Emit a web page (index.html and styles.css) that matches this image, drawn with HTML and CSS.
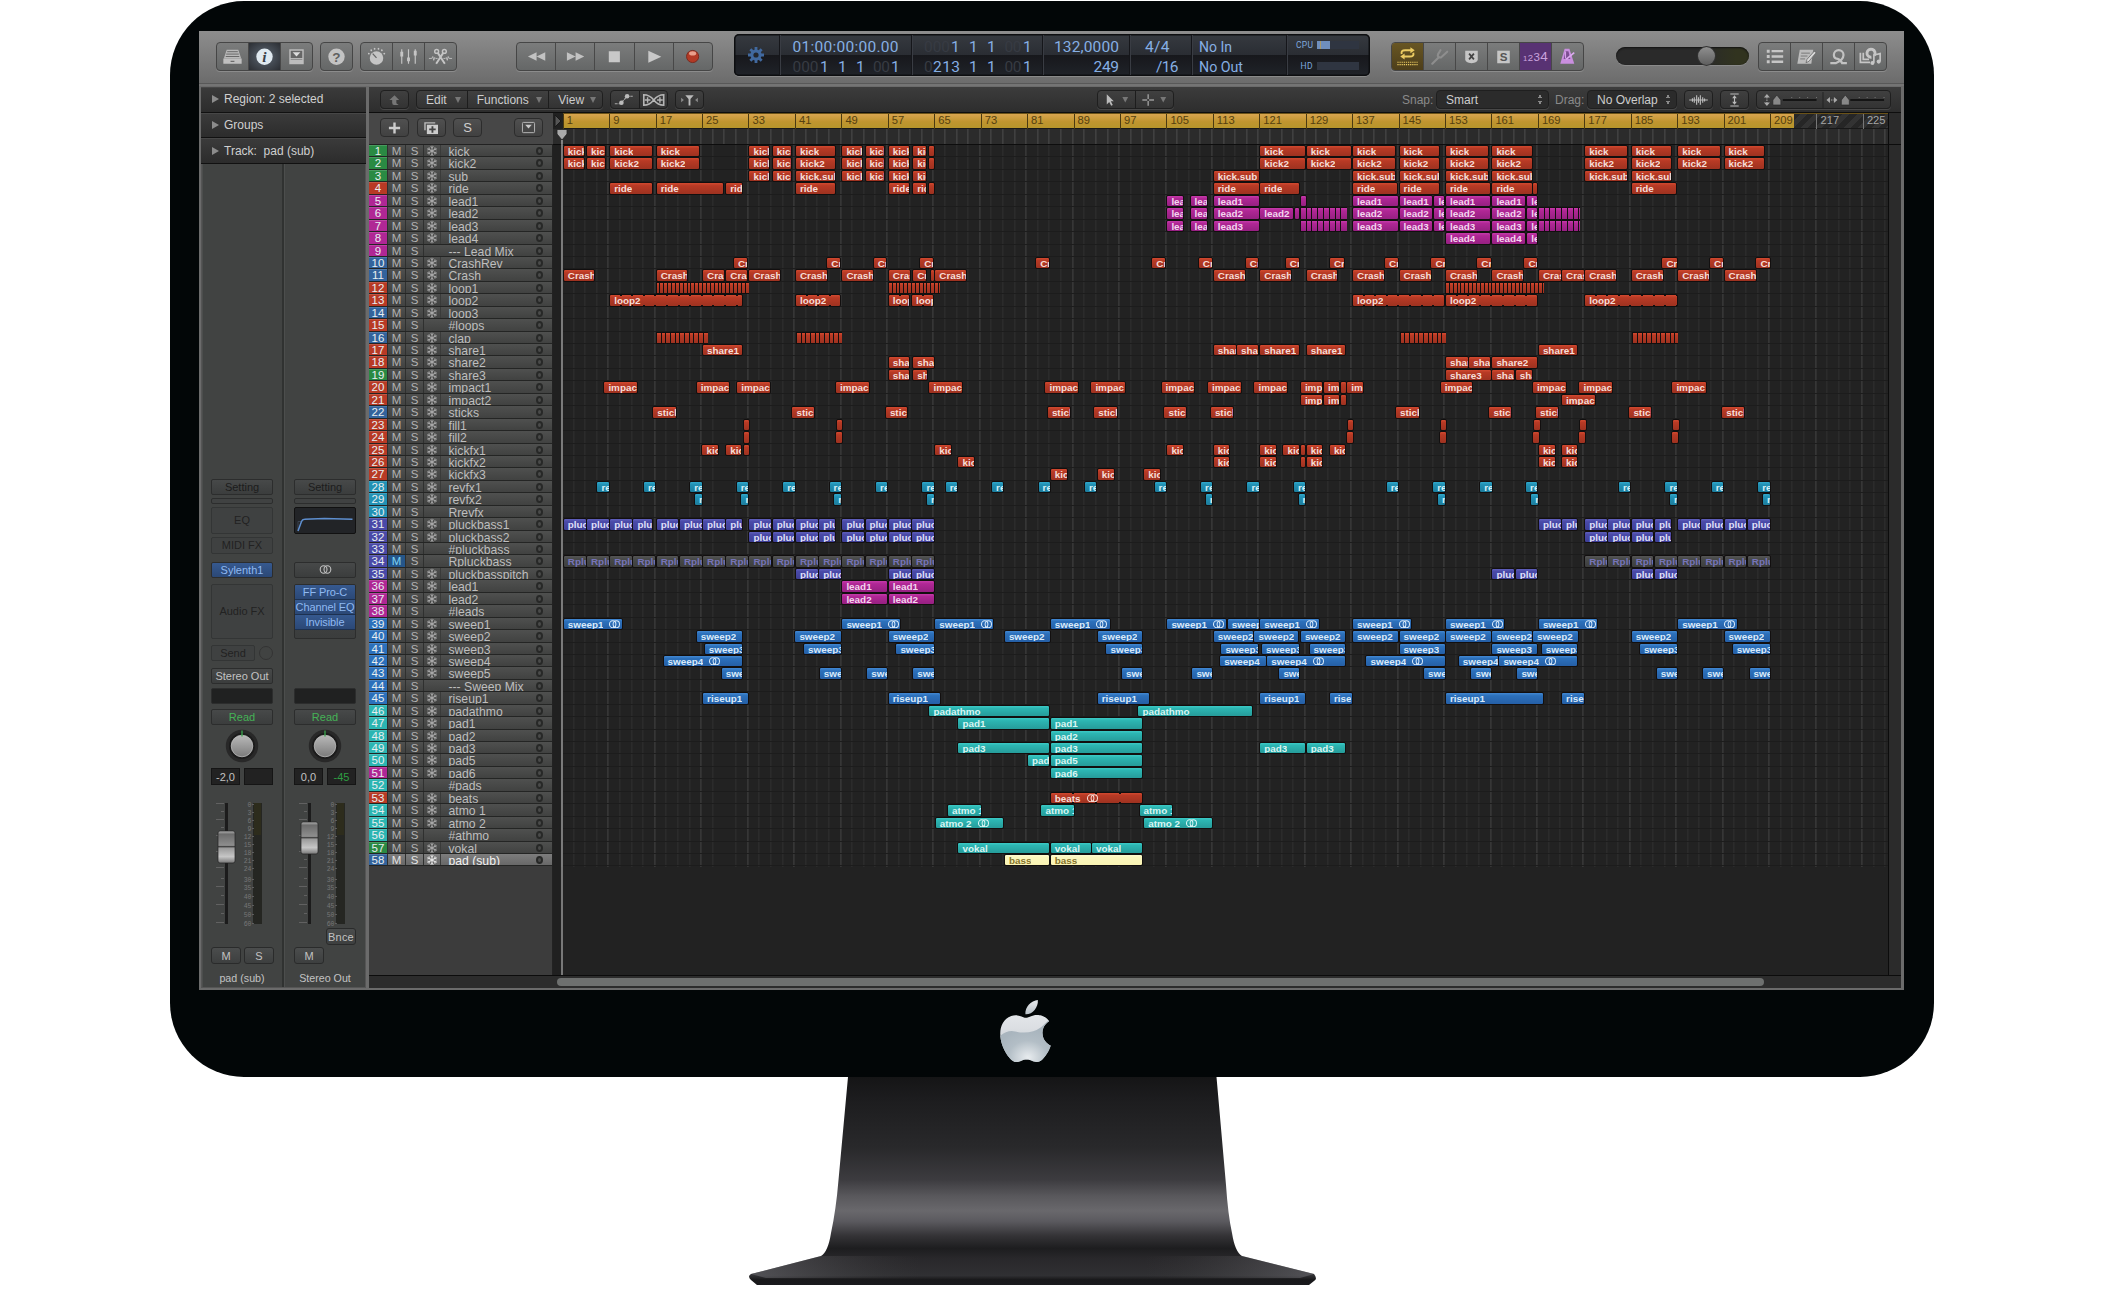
FILE: index.html
```html
<!DOCTYPE html>
<html lang="en">
<head>
<meta charset="utf-8">
<title>Arrange</title>
<link rel="stylesheet" href="styles.css">
</head>
<body>
<svg class="defs" width="0" height="0">
  <defs>
    <symbol id="flake" viewBox="0 0 12 12"><g fill="none" stroke="currentColor" stroke-width="1.1"><path d="M6 .8v10.4M1.5 3.4l9 5.2M10.500 3.400l-9 5.200"/><path d="M4.300 1.500L6 3l1.700-1.500M4.300 10.500L6 9l1.700 1.500M1.300 5l2.200-.6-.5-2.200M10.700 7l-2.200.6.5 2.200M10.700 5l-2.200-.6.5-2.200M1.300 7l2.200.6-.5 2.200" stroke-width=".8"/></g></symbol>
    <symbol id="rings" viewBox="0 0 13 9"><g fill="none" stroke="currentColor" stroke-width="1.100"><ellipse cx="4.600" cy="4.500" rx="3.400" ry="3.700"/><ellipse cx="8.400" cy="4.500" rx="3.400" ry="3.700"/></g></symbol>
    <linearGradient id="faderCap" x1="0" y1="0" x2="0" y2="1"><stop offset="0" stop-color="#b5b5b5"/><stop offset=".1" stop-color="#6c6c6c"/><stop offset=".45" stop-color="#8e8e8e"/><stop offset=".49" stop-color="#3a3a3a"/><stop offset=".53" stop-color="#9a9a9a"/><stop offset=".8" stop-color="#c6c6c6"/><stop offset="1" stop-color="#777"/></linearGradient>
    <linearGradient id="knobCap" x1="0" y1="0" x2="0" y2="1"><stop offset="0" stop-color="#b9b9b9"/><stop offset="1" stop-color="#7b7b7b"/></linearGradient>
    <symbol id="knob" viewBox="0 0 34 34"><circle cx="17" cy="17" r="16.200" fill="#282828"/><circle cx="17" cy="17" r="13" fill="#1b1b1b"/><circle cx="17" cy="17" r="10.800" fill="url(#knobCap)" stroke="#c4c4c4" stroke-width=".7"/><path d="M17 1.500v6" stroke="#3aa64c" stroke-width="1.300"/></symbol>
  </defs>
</svg>

<main class="monitor">
  <div class="screen">
    <header class="toolbar">
      <div class="group g-views">
        <button><svg viewBox="0 0 32 28"><path d="M10 7h12l3 9H7z" fill="#b9b9b9"/><path d="M10.500 9h11M9.500 11.500h13M9 14h14" stroke="#666" stroke-width="1"/><path d="M6.500 16h19v5.500h-19z" fill="#c0c0c0"/><path d="M14 19h4" stroke="#555"/></svg></button>
        <button class="pressed"><svg viewBox="0 0 32 28"><circle cx="16" cy="14.300" r="8.500" fill="#dfe9f0"/><text x="16" y="19.500" text-anchor="middle" class="info">i</text></svg></button>
        <button><svg viewBox="0 0 32 28"><rect x="8.500" y="6.500" width="15" height="15.500" fill="#bdbdbd"/><path d="M10 8h12v7.500H10z" fill="#666"/><path d="M12 9.500h8l-4 4.500z" fill="#ddd"/><path d="M10 17h12" stroke="#888"/></svg></button>
      </div>
      <div class="group g-help">
        <button><svg viewBox="0 0 32 28"><circle cx="16" cy="14.300" r="8.500" fill="#c3c3c3"/><text x="16" y="19.300" text-anchor="middle" class="help">?</text></svg></button>
      </div>
      <div class="group g-tools">
        <button><svg viewBox="0 0 32 28"><circle cx="16" cy="15.500" r="7" fill="#c5c5c5"/><path d="M12 11l4 4.500" stroke="#666" stroke-width="1.300"/><path d="M8 11l.1.100M10.500 7.500l.1.100M14 6l.1.100M18 6l.1.100M21.500 7.500l.1.100M24 11l.1.100" stroke="#c5c5c5" stroke-width="1.800" stroke-linecap="round"/></svg></button>
        <button><svg viewBox="0 0 32 28" stroke="#c5c5c5" fill="#c5c5c5"><path d="M9 6.500v15M16 6.500v15M23 6.500v15" stroke-width="1.200"/><path d="M7.500 9h3v5h-3zM14.500 15h3v4h-3zM21.500 8h3v5h-3z" stroke="none"/></svg></button>
        <button><svg viewBox="0 0 32 28" fill="none" stroke="#c5c5c5"><path d="M11.500 21.500L19 10M20.500 21.500L13 10" stroke-width="2"/><circle cx="12" cy="8.700" r="2" stroke-width="1.500"/><circle cx="20" cy="8.700" r="2" stroke-width="1.500"/><path d="M4 16h3l1-2 1 4 1-3 1 1h2M28 16h-3l-1-2-1 4-1-3-1 1h-2" stroke-width=".9"/></svg></button>
      </div>
      <div class="group g-transport">
        <button><svg viewBox="0 0 39 28"><path d="M20 9.500v9l-9-4.500zM29 9.500v9L20 14z" fill="#c2c2c2"/></svg></button>
        <button><svg viewBox="0 0 39 28"><path d="M11 9.500v9l9-4.500zM20 9.500v9l9-4.500z" fill="#c2c2c2"/></svg></button>
        <button><svg viewBox="0 0 39 28"><path d="M14 8.500h11.500v11.500H14z" fill="#c8c8c8"/></svg></button>
        <button><svg viewBox="0 0 39 28"><path d="M13.500 8v12.500L27 14.200z" fill="#c8c8c8"/></svg></button>
        <button><svg viewBox="0 0 39 28"><circle cx="19" cy="14" r="6.300" fill="#b23a25" stroke="#7a2a1e"/><ellipse cx="19" cy="10.800" rx="3.700" ry="2.200" fill="#e9a08c"/></svg></button>
      </div>
      <div class="lcd">
        <svg viewBox="734 34 636 42" width="636" height="42">
          <g transform="translate(756 55)" fill="#41699f"><circle r="5.600"/><path d="M-1.400-8h2.800v16h-2.800zM-8-1.400h16v2.800h-16z"/><path d="M-1.400-8h2.800v16h-2.800zM-8-1.400h16v2.800h-16z" transform="rotate(45)"/><circle r="2.600" fill="#23262c"/></g>
          <path d="M779.500 35v40M911.500 35v40M1042.500 35v40M1129.500 35v40M1191.500 35v40M1286.500 35v40" stroke="#15161a"/>
          <path d="M780.500 35v40M912.500 35v40M1043.500 35v40M1130.500 35v40M1192.500 35v40M1287.500 35v40" stroke="#393c43"/>
          <g class="digits">
            <text x="792.500" y="52" textLength="106">01:00:00:00.00</text>
            <text class="ghost" x="792.500" y="71.500" textLength="26">000</text><text x="820" y="71.500">1</text><text x="838" y="71.500">1</text><text x="856" y="71.500">1</text><text class="ghost" x="873" y="71.500" textLength="17">00</text><text x="891" y="71.500">1</text>
            <text class="ghost" x="924" y="52" textLength="26">000</text><text x="951" y="52">1</text><text x="969" y="52">1</text><text x="987" y="52">1</text><text class="ghost" x="1004.500" y="52" textLength="17">00</text><text x="1023" y="52">1</text>
            <text class="ghost" x="924" y="71.500" textLength="8">0</text><text x="933" y="71.500" textLength="27">213</text><text x="969" y="71.500">1</text><text x="987" y="71.500">1</text><text class="ghost" x="1004.500" y="71.500" textLength="17">00</text><text x="1023" y="71.500">1</text>
            <text x="1054" y="52" textLength="65">132,0000</text><text x="1093.500" y="71.500" textLength="25.500">249</text>
            <text x="1145" y="52" textLength="24.500">4/4</text><text x="1156" y="71.500" textLength="22.500">/16</text>
            <text x="1199" y="52" textLength="33" lengthAdjust="spacingAndGlyphs">No In</text><text x="1199" y="71.500" textLength="44" lengthAdjust="spacingAndGlyphs">No Out</text>
          </g>
          <g class="meters"><text x="1296" y="48" textLength="17">CPU</text><text x="1300.500" y="69" textLength="12">HD</text></g>
          <path d="M1317 41h42v8h-42zM1317 62h42v8h-42z" fill="#2f3541"/><path d="M1317 41h13v8h-13z" fill="#6f8fbd"/><path d="M1320.500 41v8" stroke="#a99a6a"/>
        </svg>
      </div>
      <div class="group g-modes">
        <button class="gold"><svg viewBox="0 0 32 28" fill="none" stroke="#ebcb62"><path d="M10 11.500q-1-4 3.500-4H20M22 10q1 4-3.500 4H12" stroke-width="2"/><path d="M19 4.500l4.500 3-4.500 3zM13 11l-4.500 3 4.500 3z" fill="#ebcb62" stroke="none"/><path d="M5.500 20h21M5.500 22.500h21" stroke-width="1.200" stroke-dasharray="1.300 .9"/></svg></button>
        <button><svg viewBox="0 0 32 28" fill="none" stroke="#8e8e8e" stroke-width="2.200" stroke-linecap="round"><path d="M8.500 21.500l6.500-6.500M17 7.500l-2.500 4q-1.200 3.500 3 3.500L24 9"/></svg></button>
        <button><svg viewBox="0 0 32 28"><path d="M9.500 8h13v9q0 3-6.500 4-6.500-1-6.500-4z" fill="#c6c6c6"/><path d="M13.500 11l5 6M18.500 11l-5 6" stroke="#444" stroke-width="1.800"/></svg></button>
        <button><svg viewBox="0 0 32 28"><rect x="9.500" y="8" width="13" height="13" fill="#c6c6c6"/><text x="16" y="18.500" text-anchor="middle" class="solo">S</text></svg></button>
        <button class="purple"><svg viewBox="0 0 32 28"><g class="count"><text x="3" y="18.500" font-size="8">1</text><text x="8" y="18.500" font-size="10">2</text><text x="14" y="18.500" font-size="12">3</text><text x="21" y="18.500" font-size="14">4</text></g></svg></button>
        <button><svg viewBox="0 0 32 28"><path d="M13 6h5l5 15.500H8.500z" fill="#c98fdf"/><path d="M12 16.500l2-8h3l2 8z" fill="#7c4e92"/><path d="M14.500 17L23 10" stroke="#dcaaf0" stroke-width="1.700"/><path d="M14 9v7" stroke="#dcaaf0"/></svg></button>
      </div>
      <div class="volume"><i></i></div>
      <div class="group g-browsers">
        <button><svg viewBox="0 0 32 28" fill="#c6c6c6"><path d="M8 7h3v3H8zM8 12.500h3v3H8zM8 18h3v3H8zM13 7.200h12v2.500H13zM13 12.700h12v2.500H13zM13 18.200h12v2.500H13z"/></svg></button>
        <button><svg viewBox="0 0 32 28"><path d="M9 7h14l-2 14.500H6.500z" fill="#bcbcbc"/><path d="M10.500 10.500h9M10 13.500h7M9.500 16.500h5" stroke="#777"/><path d="M24 8.500l-7.500 8.500-1 3.500 3-1.500L26 10z" fill="#d8d8d8" stroke="#666" stroke-width=".8"/></svg></button>
        <button><svg viewBox="0 0 32 28" fill="none" stroke="#c2c2c2"><path d="M7.500 20.800h6q7.500-3 7.700-8.300a5 5 0 0 0-10 0q0 3.500 4 4 3 .8 4.500 4.300h5" stroke-width="2.300"/></svg></button>
        <button><svg viewBox="0 0 32 28" fill="none" stroke="#c6c6c6"><path d="M5.500 10v10h10M8.500 10v7h6" stroke-width="1.800"/><path d="M20 13a4.200 4.200 0 1 0-3 1.800" stroke-width="3"/><path d="M19.500 20.500v-8l6.500-1.500v8" stroke-width="1.700"/><circle cx="18" cy="20.800" r="2.100" fill="#c6c6c6" stroke="none"/><circle cx="24.500" cy="19.300" r="2.100" fill="#c6c6c6" stroke="none"/></svg></button>
      </div>
    </header>

    <div class="workspace">
      <aside class="inspector">
        <div class="fold">Region: 2 selected</div>
        <div class="fold">Groups</div>
        <div class="fold">Track:&nbsp; pad (sub)</div>
        <div class="strips">
          <section class="strip">
            <div class="slot setting">Setting</div>
            <div class="slot thin"></div>
            <div class="slot empty eq">EQ</div>
            <div class="slot empty midi">MIDI FX</div>
            <div class="slot blue inst">Sylenth1</div>
            <div class="slot empty audio">Audio FX</div>
            <div class="send"><div class="slot empty">Send</div><i></i></div>
            <div class="slot out">Stereo Out</div>
            <div class="slot black"></div>
            <div class="slot read">Read</div>
            <svg class="knob"><use href="#knob"/></svg>
            <div class="values"><b>-2,0</b><b></b></div>
            <svg class="fader" data-cap="29"></svg>
            <div class="bounce"></div>
            <div class="buttons"><span>M</span><span>S</span></div>
            <div class="label">pad (sub)</div>
          </section>
          <section class="strip second">
            <div class="slot setting">Setting</div>
            <div class="slot thin"></div>
            <div class="slot curve"><svg viewBox="0 0 60 26"><path d="M3 24V14.500h4" fill="none" stroke="#3a4350" stroke-width="1"/><path d="M3 24L6.500 14.500q.8-2.300 3-2.300l20-.7 28 .7" fill="none" stroke="#5e8fd0" stroke-width="1.500"/></svg></div>
            <div class="slot midi hidden"></div>
            <div class="slot inst"><svg class="rings"><use href="#rings"/></svg></div>
            <div class="slot audio stack"><span>FF Pro-C</span><span>Channel EQ</span><span>Invisible</span></div>
            <div class="send hidden"></div>
            <div class="slot out hidden"></div>
            <div class="slot black"></div>
            <div class="slot read">Read</div>
            <svg class="knob"><use href="#knob"/></svg>
            <div class="values"><b>0,0</b><b class="green">-45</b></div>
            <svg class="fader" data-cap="20"></svg>
            <div class="bounce"><span>Bnce</span></div>
            <div class="buttons"><span>M</span></div>
            <div class="label">Stereo Out</div>
          </section>
        </div>
      </aside>

      <section class="arrange">
        <nav class="menubar">
          <div class="pill up"><svg viewBox="0 0 29 18"><path d="M14.500 4l5 5h-3v3.500l2.500 2h-5q-2 0-2-2.500V9h-3z" fill="#777"/></svg></div>
          <div class="pill menus"><span>Edit</span><span>Functions</span><span>View</span></div>
          <div class="pill pair"><svg viewBox="0 0 29 18"><path d="M4 13h6l7-8h6" fill="none" stroke="#aaa" stroke-width="1.200" stroke-dasharray="3 1"/><circle cx="11" cy="12" r="2.400" fill="#bbb"/><circle cx="17" cy="5" r="2.400" fill="#bbb"/></svg><svg viewBox="0 0 29 18"><path d="M4 3.500q6 0 10.500 5.500t10.500 5.500v-11q-6 0-10.500 5.500T4 14.500z" fill="none" stroke="#b5b5b5" stroke-width="1.700"/><path d="M5 9h6M18 9h6M8 6v6M21 6v6" stroke="#b5b5b5" stroke-width="1.500"/></svg></div>
          <div class="pill one"><svg viewBox="0 0 29 18"><path d="M10 4h9l-3.500 4v7h-2V8z" fill="#bbb"/><path d="M5.500 6.500L8.500 9l-3 2.500zM23.500 6.500l-3 2.500 3 2.500z" fill="#888"/></svg></div>
          <div class="pill pair tools"><svg viewBox="0 0 38 18"><path d="M9 3v10.500l2.500-2.500 2 4 1.700-.8-2-3.800h3z" fill="#bbb"/><path d="M25 6h6l-3 5.500z" fill="#777"/></svg><svg viewBox="0 0 38 18"><path d="M12.500 3v5M12.500 10v5M6.500 9h5M13.500 9h5" stroke="#999" stroke-width="1.500"/><path d="M25 6h6l-3 5.500z" fill="#777"/></svg></div>
          <span class="hint snap">Snap:</span><div class="pill select smart">Smart</div>
          <span class="hint drag">Drag:</span><div class="pill select overlap">No Overlap</div>
          <div class="pill one wave"><svg viewBox="0 0 29 18"><path d="M4.500 9h20M8 7v4M10 6v6M12.500 4v10M14.500 6v6M16.500 4v10M19 6v6M21 7.500v3" stroke="#bbb" stroke-width="1.200"/></svg></div>
          <div class="pill one vert"><svg viewBox="0 0 29 18"><path d="M10 2.500h9M10 15.500h9M14.500 5v8" stroke="#bbb" stroke-width="1.200"/><path d="M12 7l2.500-3 2.500 3zM12 11l2.500 3 2.500-3z" fill="#bbb"/></svg></div>
          <div class="pill zoomers"><svg viewBox="0 0 134 18"><path d="M7 6.500l3-3.500 3 3.500zM7 11.500l3 3.500 3-3.500zM73.500 6l-3.500 3 3.500 3zM77.500 6l3.500 3-3.500 3z" fill="#aaa"/><path d="M10 6v6M72 9h6" stroke="#aaa" stroke-dasharray="1.500 1"/><path d="M26 9h34M94 9h34" stroke="#151515" stroke-width="2"/><path d="M35 6v1M43 6v1M51 6v1M60 6v1M103 6v1M111 6v1M119 6v1M128 6v1" stroke="#777"/><path d="M66.500 1v16" stroke="#222"/><path d="M20 4l4 5v5h-8V9zM89 4l4 5v5h-8V9z" fill="#888" stroke="#222" stroke-width=".6"/></svg></div>
        </nav>

        <div class="editor">
          <div class="tracklist">
            <div class="trackbar">
              <div class="btn"><svg viewBox="0 0 29 18"><path d="M14.500 3v12M8.500 9h12" stroke="#ccc" stroke-width="2.600"/></svg></div>
              <div class="btn"><svg viewBox="0 0 29 18"><path d="M7.500 11.500v-8h11" fill="none" stroke="#bbb" stroke-width="1.500"/><path d="M9.500 5.500h12v10h-12z" fill="#ccc"/><path d="M15.500 7v7M12 10.500h7" stroke="#444" stroke-width="2"/></svg></div>
              <div class="btn">S</div>
              <div class="btn last"><svg viewBox="0 0 29 18"><rect x="8" y="3" width="13" height="11" rx="1" fill="none" stroke="#bbb"/><path d="M11 5.500h7l-3.500 4z" fill="#ccc"/></svg></div>
            </div>
            <div class="heads" id="heads"></div>
          </div>
          <div class="timeline">
            <div class="ruler" id="ruler"></div>
            <div class="ticks"></div>
            <div class="lanes" id="lanes"></div>
            <svg class="start" width="8" height="16"><path d="M1 2l6 6-6 6z" fill="#555" stroke="#181818"/></svg>
            <svg class="playhead" width="12" height="847"><path d="M1 1.500h10v4.500L6 12 1 6z" fill="#a9a9a9" stroke="#222" stroke-width=".8"/><path d="M6 12v835" stroke="#b4b4b4" stroke-width="1.200"/></svg>
          </div>
          <div class="vscroll"></div>
        </div>
        <div class="hscroll"><i></i></div>
      </section>
    </div>
  </div>

  <svg class="logo" viewBox="2.200 0 19.600 24" width="51" height="62">
    <defs>
      <linearGradient id="metal" x1="0" y1="0" x2="0" y2="1"><stop offset="0" stop-color="#e4e7ea"/><stop offset=".3" stop-color="#dcdfe3"/><stop offset="1" stop-color="#b6c0c7"/></linearGradient>
      <radialGradient id="sheen" cx=".52" cy=".9" r=".6"><stop offset="0" stop-color="#e8ecef"/><stop offset=".6" stop-color="#b3bec6"/><stop offset="1" stop-color="#a9b5be"/></radialGradient>
      <clipPath id="fruit"><path d="M12.152 6.896c-.948 0-2.415-1.078-3.960-1.040-2.040.027-3.910 1.183-4.961 3.014-2.117 3.675-.546 9.103 1.519 12.090 1.013 1.454 2.208 3.090 3.792 3.039 1.520-.065 2.090-.987 3.935-.987 1.831 0 2.350.987 3.960.948 1.637-.026 2.676-1.480 3.676-2.948 1.156-1.688 1.636-3.325 1.662-3.415-.039-.013-3.182-1.221-3.220-4.857-.026-3.040 2.480-4.494 2.597-4.559-1.429-2.090-3.623-2.324-4.390-2.376-2-.156-3.675 1.090-4.610 1.090z"/></clipPath>
    </defs>
    <path fill="url(#metal)" d="M15.530 3.830c.843-1.012 1.400-2.427 1.245-3.830-1.207.052-2.662.805-3.532 1.818-.780.896-1.454 2.338-1.273 3.714 1.338.104 2.715-.688 3.559-1.701"/>
    <g clip-path="url(#fruit)"><rect x="2" y="5" width="20" height="19" fill="url(#metal)"/><path d="M2 14Q5 11.500 8 12.200 14 13.500 18 10.500L23 6v18H2z" fill="url(#sheen)"/></g>
  </svg>
</main>

<svg class="stand" viewBox="745 1077 575 212" width="575" height="212">
  <defs>
    <linearGradient id="neck" gradientUnits="userSpaceOnUse" x1="0" y1="1077" x2="0" y2="1286"><stop offset="0" stop-color="#151516"/><stop offset=".1" stop-color="#1c1c1e"/><stop offset=".34" stop-color="#29292b"/><stop offset=".49" stop-color="#3c3b3f"/><stop offset=".57" stop-color="#59585c"/><stop offset=".64" stop-color="#69686c"/><stop offset=".69" stop-color="#5b5a5f"/><stop offset=".76" stop-color="#343336"/><stop offset=".82" stop-color="#1d1d1f"/><stop offset=".87" stop-color="#29282b"/><stop offset=".95" stop-color="#303033"/><stop offset=".97" stop-color="#18181a"/><stop offset="1" stop-color="#1a1a1d"/></linearGradient>
    <linearGradient id="sides" x1="0" x2="1"><stop offset="0" stop-color="#77767c" stop-opacity=".5"/><stop offset=".3" stop-color="#444" stop-opacity="0"/><stop offset=".7" stop-color="#444" stop-opacity="0"/><stop offset="1" stop-color="#77767c" stop-opacity=".5"/></linearGradient>
  </defs>
  <path fill="url(#neck)" d="M848 1077H1216.500L1226 1185Q1228 1215 1232 1233 1235 1252 1242 1256L1314 1274Q1318 1279 1314 1281L1309 1285H757L751 1280Q747 1276 751 1274L821 1256Q828 1252 831 1233 836 1210 838.500 1180Z"/>
  <path fill="url(#sides)" d="M821 1256H1242L1314 1274 1300 1278H766L751 1274Z"/>
</svg>
<script src="tracks.js"></script>
</body>
</html>
```
FILE: styles.css
```css
* { box-sizing: border-box; }
body { margin: 0; width: 2102px; height: 1289px; overflow: hidden; background: #fff; font: 12px "Liberation Sans", Arial, sans-serif; color: #cfcfcf; }
.defs { position: absolute; }
svg { display: block; }
button { border: 0; padding: 0; margin: 0; background: none; }
.hidden { visibility: hidden; }

.monitor { width: 1764px; height: 1076px; margin: 1px 0 0 170px; padding: 30px 30px 0 29px; background: #020607; border-radius: 74px; }
.screen { height: 959px; background: #6b6b6b; display: flex; flex-direction: column; }
.logo { margin: 10px auto 0 801px; }
.stand { margin-left: 745px; }

/* toolbar */
.toolbar { height: 55px; flex: none; display: flex; align-items: flex-start; padding: 11px 0 0 17px; background: linear-gradient(#8d8d8d, #6a6a6a); box-shadow: inset 0 -2px #747474, inset 0 -3px #585858; }
.group { display: flex; height: 29px; border: 1px solid #464646; border-radius: 4px; background: linear-gradient(#7b7c7c, #656767); box-shadow: 0 1px #8c8c8c; overflow: hidden; }
.group button { flex: 1; border-left: 1px solid #484848; }
.group button:first-child { border-left: 0; }
.group svg { width: 100%; height: 27px; }
.group .pressed { background: radial-gradient(#5c6672, #2b2e33); }
.group .gold { background: linear-gradient(#685623, #4d3e1a); }
.group .purple { background: #583273; }
.g-views { width: 97px; margin-right: 7px; }
.g-help { width: 33px; margin-right: 7px; }
.g-tools { width: 97px; margin-right: 59px; }
.g-transport { width: 197px; margin-right: 21px; }
.g-modes { width: 193px; margin-right: 32px; }
.g-browsers { width: 129px; }
.info { font: italic bold 16px "Liberation Serif", serif; fill: #3a4048; }
.help { font: bold 14px "Liberation Sans", sans-serif; fill: #5f5f5f; }
.solo { font: bold 12px "Liberation Sans", sans-serif; fill: #555; }
.count { fill: #c9a2dd; font-family: "Liberation Sans", sans-serif; }
.lcd { width: 636px; height: 42px; margin: -8px 21px 0 0; border-radius: 5px; background: linear-gradient(#363a40, #2a2d33 50%, #17181c 51%, #202329); box-shadow: inset 0 0 0 1.500px #0d0e10, 0 1px #8a8a8a; }
.digits text { font: 15.500px Roboto, sans-serif; fill: #86afe4; }
.digits .ghost { fill: #373b43; }
.lcd .meters text { font: 8.500px Roboto, sans-serif; fill: #7fa8de; }
.volume { width: 133px; height: 18px; margin: 5px 9px 0 0; border-radius: 9px; background: linear-gradient(90deg, #2a2a2a 65%, #31331f 90%); box-shadow: inset 0 1px 2px #111, 0 1px #8a8a8a; padding: 0 0 0 82px; }
.volume i { display: block; width: 17px; height: 18px; border-radius: 50%; background: linear-gradient(#8f8f8f, #5f5f5f); box-shadow: 0 0 0 1px #333; }

.workspace { display: flex; gap: 3px; flex: 1; padding: 1px 2px 2px; }

/* inspector */
.inspector { width: 165px; background: #414342; display: flex; flex-direction: column; }
.fold { height: 25.700px; flex: none; display: flex; align-items: center; gap: 5px; padding-left: 11px; background: linear-gradient(#3b3b3b, #2c2c2c); border-bottom: 1px solid #111; box-shadow: inset 0 1px #474747; color: #d0d0d0; white-space: pre; }
.fold::before { content: ""; border-left: 7px solid #8c8c8c; border-top: 4px solid transparent; border-bottom: 4px solid transparent; }
.strips { display: flex; flex: 1; border: 1px solid #555; border-top: 0; }
.strip { width: 82px; padding: 314.500px 9px 0; border-right: 2px solid #303231; box-shadow: inset 1px 0 #4c4e4d; display: flex; flex-direction: column; color: #c2c2c2; font-size: 11px; }
.strip.second { border-right: 0; padding-left: 10px; }
.slot { height: 16px; flex: none; border: 1px solid #2c2d2d; border-radius: 2px; background: linear-gradient(#474949, #3b3d3d); display: flex; align-items: center; justify-content: center; overflow: hidden; white-space: nowrap; margin-bottom: 3px; }
.setting { color: #1c1c1c; }
.slot.thin { height: 6px; margin-bottom: 3px; background: #404242; }
.slot.empty { background: #3f4141; color: #222; border-color: #333535; }
.slot.eq, .slot.curve { height: 27px; margin-bottom: 3px; }
.slot.curve { background: #222427; border-color: #111; }
.curve svg { width: 60px; height: 26px; }
.slot.midi { margin-bottom: 8px; height: 17px; }
.slot.inst { margin-bottom: 6px; }
.slot.blue, .stack span { background: linear-gradient(#36598f, #2b4876); color: #8fb9f2; }
.slot.audio { height: 55px; margin-bottom: 6px; }
.stack { flex-direction: column; justify-content: flex-start; align-items: stretch; }
.stack span { height: 15px; line-height: 15px; text-align: center; border-bottom: 1px solid #1d3150; border-radius: 2px; margin: 0 -2px; letter-spacing: -.1px; }
.rings { width: 13px; height: 9px; }
.send { display: flex; gap: 4px; height: 16px; margin-bottom: 7px; }
.send .slot { width: 44px; }
.send i { width: 14px; height: 14px; border: 1px solid #333; border-radius: 50%; margin-top: 1px; }
.slot.out { margin-bottom: 4px; }
.slot.black { background: #202121; margin-bottom: 5px; }
.slot.read { color: #45b256; margin-bottom: 4px; }
.knob { width: 34px; height: 34px; margin: 0 auto 5px; flex: none; }
.values { display: flex; gap: 4px; height: 17px; margin-bottom: 17px; flex: none; }
.values b { flex: 1; background: #222; border: 1px solid #151515; font-weight: normal; text-align: center; line-height: 16px; }
.values .green { color: #2f9e43; }
.fader { width: 62px; height: 130px; flex: none; }
.fader text { font: 6.500px "Liberation Mono", monospace; fill: #777; text-anchor: end; }
.bounce { height: 14px; display: flex; justify-content: flex-end; align-items: flex-end; margin-top: -1px; flex: none; }
.bounce span, .buttons span { width: 30px; height: 17px; line-height: 16px; text-align: center; border: 1px solid #2a2b2b; border-radius: 3px; background: linear-gradient(#4b4d4d, #3d3f3f); flex: none; }
.bounce span { letter-spacing: .2px; }
.buttons { display: flex; gap: 3px; padding-top: 2px; }
.label { text-align: center; margin: 8px -6px 0; font-size: 10.700px; }

/* arrange window */
.arrange { width: 1532px; display: flex; flex-direction: column; background: #2a2a2a; }
.menubar { height: 26px; flex: none; display: flex; align-items: center; padding-left: 11px; background: linear-gradient(#3c3c3c, #2d2d2d); border-bottom: 1px solid #0e0e0e; }
.pill { height: 19px; flex: none; display: flex; align-items: center; border: 1px solid #1f1f1f; border-radius: 4px; background: linear-gradient(#404040, #333); box-shadow: 0 1px #484848; color: #cdcdcd; }
.pill svg { width: 100%; height: 18px; }
.pill.up, .pill.one { width: 29px; }
.up { margin-right: 7px; }
.menus { width: 187px; margin-right: 7px; }
.menus span { display: flex; align-items: center; justify-content: space-between; height: 17px; padding: 0 6px 0 9px; border-left: 1px solid #1d1d1d; }
.menus span:nth-child(1) { width: 50px; border: 0; }
.menus span:nth-child(2) { width: 82px; }
.menus span:nth-child(3) { width: 54px; }
.menus span::after { content: ""; border-top: 6px solid #777; border-left: 3px solid transparent; border-right: 3px solid transparent; }
.pair { width: 58px; margin-right: 7px; }
.pair svg { flex: 1; width: 50%; }
.pair svg + svg { border-left: 1px solid #1d1d1d; }
.tools { width: 77px; margin: 0 228px 0 393px; }
.hint { color: #8a8a8a; }
.snap { width: 34px; }
.drag { width: 32px; }
.select { justify-content: space-between; padding: 0 5px 0 9px; background: #2b2b2b; }
.select::after { content: ""; width: 6px; height: 11px; background: conic-gradient(from 150deg at 50% 0, #888 60deg, transparent 0) 0 0 / 6px 4px no-repeat, conic-gradient(from -30deg at 50% 100%, #888 60deg, transparent 0) 0 7px / 6px 4px no-repeat; }
.smart { width: 113px; margin-right: 6px; }
.overlap { width: 90px; margin-right: 7px; }
.wave { margin-right: 7px; }
.vert { margin-right: 7px; }
.zoomers { width: 135px; }

.editor { display: flex; height: 862px; flex: none; }
.tracklist { width: 184.400px; flex: none; background: #3c3c3c; display: flex; flex-direction: column; }
.trackbar { height: 32px; flex: none; display: flex; gap: 7.500px; padding: 5px 0 0 11px; background: #474747; border-bottom: 1px solid #222; }
.btn { width: 29px; height: 19px; border: 1px solid #2c2c2c; border-radius: 4px; background: linear-gradient(#505050, #414141); font-size: 13px; line-height: 17px; text-align: center; }
.btn svg { width: 100%; height: 18px; }
.btn.last { margin-left: 24px; }
.heads { flex: 1; border-right: 1px solid #222; }
.head { height: 12.440px; display: flex; background: linear-gradient(#4f504f, #414241); border-bottom: 1px solid #242524; overflow: hidden; line-height: 13px; color: #bebebe; }
.head .num { width: 18px; text-align: center; font-size: 11.500px; color: #e8eef0; background: var(--c); box-shadow: inset 0 1px rgba(255, 255, 255, .15); }
.head .cell { width: 18px; text-align: center; border-left: 1px solid #2f302f; font-size: 11.500px; color: #b2b2b2; }
.head .cell svg { width: 12px; height: 12px; margin: 0 auto; color: #a8a8a8; }
.head .cell.wide { border-right: 1px solid #3a3b3a; }
.head .cell.blank { border-right: 1px solid transparent; }
.head .cell.muted { background: #25568a; color: #7fd6f5; }
.head .name { flex: 1; padding-left: 7.500px; font-size: 12.200px; line-height: 14.600px; height: 12.400px; overflow: hidden; }
.head .dot { width: 7px; height: 8px; margin: 2px 9px 0 0; border-radius: 50%; background: #4a4b4a; border: 2px solid #272827; }
.head.selected { background: linear-gradient(#7d7d7d, #686868); color: #f2f2f2; }
.head.selected .cell, .head.selected svg { color: #e5e5e5; }

.timeline { position: relative; width: 1334.600px; background: #222; display: flex; flex-direction: column; overflow: hidden; box-shadow: inset 9.500px 0 #202020; }
.ruler { position: relative; height: 16px; flex: none; margin-left: 9.400px; border-top: 1px solid #6a5218; border-bottom: 1px solid #181818; background: linear-gradient(#d9a54f, #c0952f 55%, #b6952b) 0 0 / 1231px 100% no-repeat, repeating-linear-gradient(135deg, #262626 0 5px, #333 5px 10px); }
.ruler span { position: absolute; top: 0; height: 15px; padding-left: 3px; border-left: 1px solid #4a3a12; font-size: 11.200px; line-height: 12px; color: #54400f; }
.ruler span.off { color: #a5a5a5; border-color: #777; }
.ticks { height: 16px; flex: none; border-bottom: 1px solid #0d0d0d; padding-left: 9.400px; background: repeating-linear-gradient(90deg, transparent 0 10.600px, #4d4d4d 10.600px 11.607px) 9.400px 0, #2b2b2b; }
.lanes { height: 721.520px; padding-left: 9.400px; background: repeating-linear-gradient(90deg, transparent 0 45.430px, #3d3d3d 45.430px 46.430px) 9.400px 0, repeating-linear-gradient(90deg, transparent 0 10.610px, #303030 10.610px 11.607px) 9.400px 0; }
.lane { position: relative; height: 12.440px; box-shadow: inset 0 -1px #1c1c1c; }
.region { position: absolute; top: 0; height: 12.440px; border: 1px solid #120f0f; border-radius: 2px; background: linear-gradient(var(--hi), var(--c) 25%, var(--lo)); color: #f7ded8; overflow: hidden; white-space: nowrap; display: flex; }
.region b { flex: 0 1 auto; min-width: 0; height: 10.400px; padding-left: 4px; font-size: 9.900px; line-height: 11.600px; overflow: hidden; }
.region.ringed b { flex: none; }
.region svg { flex: none; width: 13px; height: 8.500px; margin: 1px 0 0 5px; }
.region.notched { background: repeating-linear-gradient(90deg, transparent 0 calc(var(--n) - 2px), #111 calc(var(--n) - 2px) var(--n)) 0 0 / 100% 1px no-repeat, repeating-linear-gradient(90deg, transparent 0 calc(var(--n) - 2px), #111 calc(var(--n) - 2px) var(--n)) 0 100% / 100% 1px no-repeat, linear-gradient(var(--hi), var(--c) 25%, var(--lo)); }
.region.slice { border-radius: 0; border-right: 0; }
.red { --c: #b83a25; --hi: #d2492f; --lo: #9e3220; }
.magenta { --c: #b02795; --hi: #c63aab; --lo: #962082; color: #f5d5ef; }
.green { --c: #2a8a43; }
.navy { --c: #33639c; }
.cyan { --c: #2292b5; --hi: #31a9cc; --lo: #1d7d9c; color: #d5f1f8; }
.indigo { --c: #4a4aa8; --hi: #6060bd; --lo: #3f3f96; color: #dfdff8; }
.gray { --c: #484a4a; --hi: #555; --lo: #3d3e3e; color: #7674b8; }
.blue { --c: #2c70bb; --hi: #4288d2; --lo: #255fa6; color: #d9eafa; }
.teal { --c: #2cb5b2; --hi: #3ccac6; --lo: #269c9a; color: #d9f6f4; }
.cream { --c: #fbf6bd; --hi: #fffbd0; --lo: #faf4b4; color: #85732c; }
.start { position: absolute; left: 1px; top: 0; }
.playhead { position: absolute; left: 2.600px; top: 15px; }
.vscroll { flex: 1; border-left: 1px solid #0c0c0c; background: linear-gradient(#2b2b2b 31px, #0c0c0c 31px 32px, #2b2b2b 32px); }
.hscroll { flex: 1; border-top: 1px solid #0c0c0c; background: #2c2c2c; padding: 2px 0 0 188px; }
.hscroll i { display: block; width: 1207px; height: 8px; border-radius: 4px; background: #6e706f; }
```
FILE: tracks.js
```js
const BAR = 5.804;

// color, name, regions. A region is start-end in bars, then optional marks:
// ~ no label, o loop rings, sN sliced every N bars, nN notched every N bars, =text other label
const bars = (from, to, step, len) => {
  const out = [];
  for (let b = from; b < to; b += step) out.push(`${b}-${b + len}`);
  return out.join(' ');
};
const KICK = '0-3.8 4-7.4 8-15.4 16-23.5 32-35.6 36-39.4 40-46.9 48-51.6 52-55.4 56-59.8 60.2-62.6 63-64~ 120-127.9 128-135.9 136-143.4 144-151 152-159.5 160-167 176-183.4 184-191 192-199.5 200-207';
const LEAD = '136-143.9 144-149.9 150-151.9 152-159.9 160-165.9 166-168';
const TRACKS = [
  ['green', 'kick', KICK, 'red'],
  ['green', 'kick2', KICK, 'red'],
  ['green', 'sub', '32-35.6 36-39.4 40-46.9 48-51.6 52-55.4 56-59.8 60.2-62.6 112-120 136-143.4 144-151 152-159.5 160-167 176-183.4 184-191', 'red', 'kick.sub'],
  ['red', 'ride', '8-15.4 16-27.7 28-30.9 40-46.9 56-59.8 60.2-62.6 63-64~ 112-120 120-127 136-143.8 144-151 152-159.8 160-167 167-168~ 184-191.8'],
  ['magenta', 'lead1', '104-107 108-111 112-120 127-128.2~ ' + LEAD],
  ['magenta', 'lead2', '104-107 108-111 112-120 120-125.9 126-127~ 127-135.1s1 ' + LEAD + ' 168-175.2s1'],
  ['magenta', 'lead3', '104-107 108-111 112-120 127-135.1s1 ' + LEAD + ' 168-175.2s1'],
  ['magenta', 'lead4', '152-159.9 160-165.9 166-168'],
  ['magenta', '--- Lead Mix', ''],
  ['navy', 'CrashRev', '29.3-31.8 45.4-47.9 53.4-55.8 61.4-63.9 81.4-83.9 101.4-103.9 109.4-111.9 117.5-119.9 124.4-127 132-134.6 141.5-144 149.5-152 157.4-160 165.5-168 189.3-192 197.5-200 205.5-208', 'red'],
  ['navy', 'Crash', '0-5.5 16-21.5 24-27.9 28-31.9 32-37.5 40-45.6 48-53.6 56-59.9 60.2-62.7 63.2-64~ 64-69.6 112-117.6 120-125.6 128-133.5 136-141.6 144-149.6 152-157.6 160-165.6 168-172 172-176 176-181.6 184-189.6 192-197.6 200-205.6', 'red'],
  ['red', 'loop1', '16-32s0.667 56-64.9s0.667 152-168.9s0.667'],
  ['red', 'loop2', '8-30.9n2 40-47.9n2 56-59.8n2 60-63.8n2 136-151.9n2 152-168n2 176-192n2'],
  ['navy', 'loop3', ''],
  ['red', '#loops', ''],
  ['navy', 'clap', '16.1-24.9s0.8 40.2-48s0.8 144.2-152s0.8 184.3-192s0.8', 'red'],
  ['red', 'share1', '24-30.9 112-116 116-119.9 120-127 128-134.9 168-174.9'],
  ['red', 'share2', '56-59.8 60.2-64 152-156 156-159.9 160-168'],
  ['green', 'share3', '56-59.8 60.2-62.8 152-160 160-164 164-167', 'red'],
  ['red', 'impact1', '7-12.8=impac 22.9-28.8=impac 29.9-35.8=impac 46.9-52.8=impac 63-68.9=impac 83-88.8=impac 90.9-96.9=impac 103-108.8=impac 111-116.9=impac 119-124.9=impac 127-130.9 131-133.9 134-135~ 135-137.9 151.1-156.8=impac 167-172.9=impac 175-180.9=impac 191-197=impac'],
  ['red', 'impact2', '127-130.9 131-133.9 134-135.1~ 172-178=impac'],
  ['navy', 'sticks', '15.4-19.5 39.4-43.3 55.5-59.4 83.4-87.5 91.4-95.6 103.5-107.5 111.5-115.5 143.4-147.6 159.5-163.5 167.5-171.6 183.6-187.5 199.6-203.6', 'red'],
  ['red', 'fill1', '31-32.2~ 47-48.2~ 135.1-136.3~ 151.1-152.3~ 167.2-168.4~ 175.1-176.3~ 191.1-192.4~'],
  ['red', 'fill2', '31-32.2~ 46.9-48.1~ 135-136.2~ 151-152.3~ 167-168.2~ 175-176.2~ 191-192.3~'],
  ['red', 'kickfx1', '23.9-26.8 28-30.8 31-32.1~ 64-66.9 104-107 112-114.9 120-122.9 124-126.9 127-128~ 128-130.8 132-134.9 168-171 172-174.9'],
  ['red', 'kickfx2', '68-71 112-114.9 120-122.9 127-128~ 128-130.8 168-171 172-174.9'],
  ['red', 'kickfx3', '83.9-86.9 92-95 100-102.9'],
  ['cyan', 'revfx1', [5.8, 13.8, 21.8, 29.8, 37.8, 45.8, 53.8, 61.8, 65.8, 73.8, 81.8, 89.8, 101.8, 109.8, 117.8, 125.8, 141.8, 149.8, 157.9, 165.8, 181.8, 189.8, 197.8, 205.8].map(b => `${b}-${b + 2.2}`).join(' ')],
  ['cyan', 'revfx2', [22.6, 30.6, 46.6, 62.6, 110.6, 126.6, 150.6, 166.7, 190.6, 206.6].map(b => `${b}-${b + 1.4}`).join(' ')],
  ['cyan', 'Rrevfx', ''],
  ['indigo', 'pluckbass1', bars(0, 12, 4, 4) + ' 12-15.5 ' + bars(16, 28, 4, 4) + ' 28-31 ' + bars(32, 44, 4, 4) + ' 44-46.9 ' + bars(48, 64, 4, 4) + ' 168-172 172-174.9 176-180 180-184 184-188 188-191 ' + bars(192, 208, 4, 4)],
  ['indigo', 'pluckbass2', '32-36 36-40 40-44 44-46.9 ' + bars(48, 64, 4, 4) + ' 176-180 180-184 184-188 188-191'],
  ['indigo', '#pluckbass', ''],
  ['indigo', 'Rpluckbass', bars(0, 64, 4, 4) + ' ' + bars(176, 208, 4, 4), 'gray'],
  ['indigo', 'pluckbasspitch', '40-44 44-48 56-60 60-64 160-164 164-168 184-188 188-192'],
  ['magenta', 'lead1', '48-55.9 56-64'],
  ['magenta', 'lead2', '48-55.9 56-64'],
  ['magenta', '#leads', ''],
  ['blue', 'sweep1', '0-10.2o 48-58.2o 64-74.2o 83.9-94.3o 104-114.3o 114.4-120 120-130.3o 136-146.3o 152-162.3o 168-178.3o 192-202.3o'],
  ['blue', 'sweep2', '22.9-30.9 39.9-48 56-64 76-84 92-99.9 112-119 119-126.8 127-134.9 136-144 144-152 152-160 160-167 167-174.9 184-192 200-208'],
  ['blue', 'sweep3', '24.3-30.9 41.4-48 57.3-64 93.5-99.9 113.3-119.9 120.3-127 128.5-134.9 144-152 160-168 168.5-174.9 185.4-192 201.4-208'],
  ['blue', 'sweep4', '17.2-30.9o 113.1-121.2 121.2-134.9o 138.3-152o 154.2-161.2 161.2-174.9o'],
  ['blue', 'sweep5', '27.2-30.9 44.1-48 52.3-55.9 60.2-64 96.2-99.9 108.3-112 123.3-127 148.2-152 156.4-160 164.3-168 188.3-192 196.3-200 204.3-208'],
  ['blue', '--- Sweep Mix', ''],
  ['blue', 'riseup1', '24-31.9 56-65 92-101 120-128 132-136=rise 152-169 172-176=rise'],
  ['teal', 'padathmo', '63-83.9 99-118.9'],
  ['teal', 'pad1', '68-83.9 83.9-99.9'],
  ['teal', 'pad2', '83.9-99.9'],
  ['teal', 'pad3', '68-83.9 83.9-99.9 120-128 128-134.9'],
  ['teal', 'pad5', '80-83.9 83.9-99.9'],
  ['magenta', 'pad6', '83.9-99.9', 'teal'],
  ['teal', '#pads', ''],
  ['red', 'beats', '83.9-99.9on4'],
  ['teal', 'atmo 1', '66.2-72.1 82.3-88.1 99.2-105.1'],
  ['teal', 'atmo 2', '64.1-75.9o 100-112o'],
  ['teal', '#athmo', ''],
  ['green', 'vokal', '68-83.9 83.9-91 91-99.9', 'teal'],
  ['navy', 'pad (sub)', '76-83.9 83.9-99.9', 'cream', 'bass']
];

const isFolder = name => /^[#-]/.test(name) || name === 'Rrevfx' || name === 'Rpluckbass';

function head([color, name], i) {
  const flake = isFolder(name)
    ? '<span class="cell blank"></span>'
    : '<span class="cell wide"><svg><use href="#flake"/></svg></span>';
  return `<div class="head${i === 57 ? ' selected' : ''}"><span class="num ${color}">${i + 1}</span>` +
    `<span class="cell${i === 33 ? ' muted' : ''}">M</span><span class="cell">S</span>${flake}` +
    `<span class="name">${name}</span><i class="dot"></i></div>`;
}

function box(color, start, end, cls, inner, extra = '') {
  return `<div class="region ${color} ${cls}" style="left:${(start * BAR).toFixed(1)}px;width:${((end - start) * BAR + 0.6).toFixed(1)}px${extra}">${inner}</div>`;
}

function lane([color, name, spec, tint, label]) {
  const regions = spec.split(' ').filter(Boolean).map(item => {
    const m = item.match(/^([\d.]+)-([\d.]+)(~?)(o?)(?:s([\d.]+))?(?:n(\d+))?(?:=(.+))?$/);
    const start = +m[1], end = +m[2], c = tint || color;
    if (m[5]) {
      let out = '';
      for (let b = start; b < end - 0.15; b += +m[5]) out += box(c, b, Math.min(b + +m[5], end), 'slice', '');
      return out;
    }
    const text = m[3] ? '' : `<b>${m[7] || label || name}</b>`;
    const rings = m[4] ? '<svg><use href="#rings"/></svg>' : '';
    const cls = (m[6] ? 'notched ' : '') + (m[4] ? 'ringed' : '');
    return box(c, start, end, cls, text + rings, m[6] ? `;--n:${m[6] * BAR}px` : '');
  });
  return `<div class="lane">${regions.join('')}</div>`;
}

document.getElementById('heads').innerHTML = TRACKS.map(head).join('');
document.getElementById('lanes').innerHTML = TRACKS.map(lane).join('');

let marks = '';
for (let b = 0; b <= 224; b += 8) {
  marks += `<span class="${b > 208 ? 'off' : ''}" style="left:${(b * BAR).toFixed(1)}px">${b + 1}</span>`;
}
document.getElementById('ruler').innerHTML = marks;

const SCALE = [[0, 3], [3, 11], [6, 19], [9, 27], [12, 35], [15, 43], [18, 51], [21, 59], [24, 67], [30, 78], [35, 86], [40, 95], [45, 104], [50, 113], [60, 122]];
document.querySelectorAll('.fader').forEach(svg => {
  const y = +svg.dataset.cap;
  let s = '<path d="M15.500 1v121" stroke="#1c1c1c" stroke-width="3"/><path d="M46.500 1v121" stroke="#252622" stroke-width="9"/><path d="M46.500 1v32" stroke="#2d2c1c" stroke-width="7"/>';
  SCALE.forEach(([n, py], i) => {
    s += `<text x="40.500" y="${py + 1.8}">${n}</text><path d="M${i % 2 ? 10 : 5} ${py - 1.5}h${i % 2 ? 3 : 8}M41 ${py - .5}h2" stroke="#6a6a6a" stroke-width=".8"/>`;
  });
  s += `<rect x="7" y="${y}" width="17" height="32" rx="2" fill="url(#faderCap)" stroke="#222" stroke-width=".7"/>`;
  svg.innerHTML = s;
});
```
